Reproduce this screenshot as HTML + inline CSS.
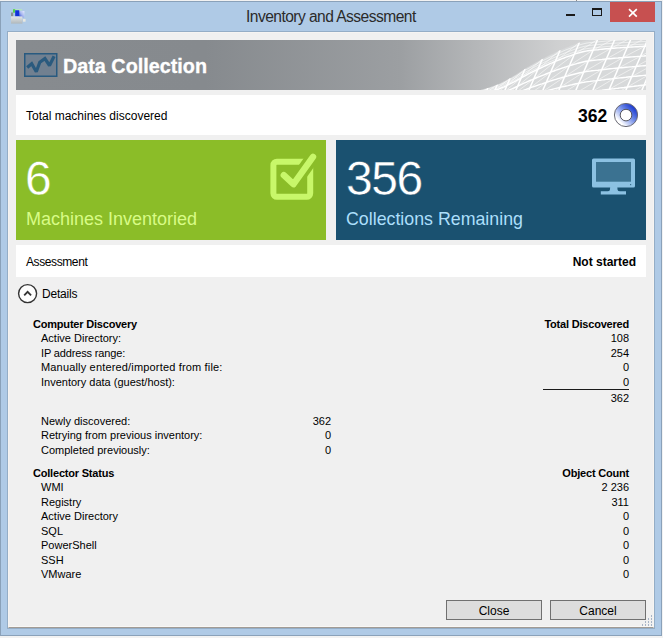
<!DOCTYPE html>
<html><head><meta charset="utf-8">
<style>
html,body{margin:0;padding:0;}
body{width:663px;height:638px;position:relative;overflow:hidden;background:#f2f2f2;font-family:"Liberation Sans",sans-serif;}
.a{position:absolute;}
.t{position:absolute;white-space:nowrap;line-height:1;}
#win{left:0;top:1px;width:660px;height:633px;background:#afcae6;border:1px solid #8aa1b9;}
#edge{left:7px;top:31px;width:646px;height:596px;border:1px solid #94adc6;}
#client{left:8px;top:32px;width:644px;height:594px;background:#f0f0f0;border:1px solid #f6f4f2;border-bottom-color:#a19b95;box-shadow:inset 0 -1px 0 #f8f7f5;}
.r{text-align:right;}
.n{font-size:11px;color:#000;}
.b{font-size:11px;font-weight:bold;color:#000;letter-spacing:-0.2px;}
</style></head><body>
<div id="win" class="a"></div>
<div class="a" style="left:576px;top:0;width:1px;height:1px;background:#8c8c8c"></div>
<!-- title -->
<div class="t" style="left:246px;top:9px;font-size:15.6px;letter-spacing:-0.55px;color:#2b2b2b;">Inventory and Assessment</div>
<!-- app icon -->
<svg class="a" style="left:10px;top:8px" width="17" height="17" viewBox="0 0 17 17">
  <defs><linearGradient id="ig" x1="1" y1="0" x2="0" y2="1"><stop offset="0" stop-color="#e8ecff"/><stop offset="0.5" stop-color="#a8b8f0"/><stop offset="1" stop-color="#3048d0"/></linearGradient>
  <linearGradient id="bg2" x1="0" y1="0" x2="0" y2="1"><stop offset="0" stop-color="#e2e6e8"/><stop offset="1" stop-color="#b0b8bc"/></linearGradient></defs>
  <rect x="3" y="1.2" width="9" height="1.2" fill="#b8e8b8"/>
  <rect x="3" y="1.2" width="2.2" height="3.5" fill="#50d050"/>
  <rect x="1" y="4.5" width="2.2" height="4" fill="#8a9090"/>
  <rect x="9.2" y="3" width="5.2" height="6.5" fill="url(#ig)"/>
  <path d="M5.2 2.2 L9.2 2.2 L9.4 8.4 L5.2 8.4 Z" fill="#1030d8"/>
  <rect x="1" y="8.4" width="11.5" height="7.2" fill="url(#bg2)"/>
  <rect x="13" y="10.9" width="2.6" height="2.8" fill="#e8e8e0"/>
</svg>
<!-- min / max / close -->
<div class="a" style="left:566px;top:14px;width:9px;height:2px;background:#1a1a1a"></div>
<div class="a" style="left:592px;top:8px;width:8px;height:5px;border:1px solid #1a1a1a;border-top-width:2px"></div>
<div class="a" style="left:610px;top:2px;width:45px;height:20px;background:#c75050"></div>
<svg class="a" style="left:628px;top:8px" width="10" height="10" viewBox="0 0 10 10"><path d="M1 1.2L8.8 8.6M8.8 1.2L1 8.6" stroke="#fff" stroke-width="1.7"/></svg>

<div id="edge" class="a"></div>
<div id="client" class="a"></div>

<!-- header banner -->
<div class="a" style="left:16px;top:40px;width:630px;height:50px;background:linear-gradient(to right,#878b8f 0%,#868a8e 30%,#9c9fa2 61%,#cfd0d1 86%,#dadada 100%);overflow:hidden">
  <svg class="a" style="left:0;top:0" width="630" height="50" viewBox="0 0 630 50">
<defs><clipPath id="mc"><path d="M424.0 54.0 L425.3 54.0 L427.0 53.9 L428.9 53.9 L431.2 53.8 L433.6 53.8 L436.1 53.7 L438.7 53.6 L441.2 53.5 L443.7 53.4 L446.0 53.3 L448.1 53.2 L450.0 53.0 L451.6 52.8 L453.1 52.6 L454.4 52.4 L455.6 52.2 L456.8 52.0 L457.9 51.8 L458.9 51.5 L460.0 51.3 L461.1 51.0 L462.2 50.7 L463.3 50.3 L464.6 50.0 L465.9 49.6 L467.3 49.3 L468.7 48.8 L470.1 48.4 L471.6 48.0 L473.0 47.5 L474.4 47.1 L475.9 46.6 L477.3 46.1 L478.7 45.6 L480.1 45.0 L481.4 44.5 L482.7 44.0 L484.0 43.4 L485.2 42.8 L486.4 42.2 L487.6 41.6 L488.8 41.0 L490.0 40.4 L491.2 39.7 L492.4 39.1 L493.6 38.4 L494.8 37.7 L496.0 37.0 L497.2 36.3 L498.5 35.5 L499.8 34.7 L501.0 33.9 L502.3 33.1 L503.6 32.3 L504.9 31.5 L506.1 30.7 L507.4 29.9 L508.6 29.1 L509.8 28.3 L511.0 27.6 L512.1 26.9 L513.3 26.3 L514.4 25.6 L515.4 25.0 L516.5 24.4 L517.5 23.8 L518.6 23.2 L519.6 22.6 L520.7 22.0 L521.8 21.4 L522.9 20.8 L524.0 20.2 L525.2 19.6 L526.3 19.0 L527.5 18.3 L528.7 17.7 L529.9 17.1 L531.2 16.4 L532.4 15.8 L533.6 15.2 L534.8 14.6 L536.1 14.0 L537.3 13.4 L538.5 12.8 L539.7 12.2 L540.9 11.7 L542.1 11.1 L543.3 10.5 L544.5 10.0 L545.7 9.5 L546.9 8.9 L548.1 8.4 L549.3 7.9 L550.6 7.4 L551.8 6.9 L553.0 6.4 L554.2 5.9 L555.5 5.4 L556.8 4.9 L558.0 4.4 L559.3 4.0 L560.6 3.5 L561.9 3.1 L563.1 2.6 L564.4 2.2 L565.6 1.9 L566.8 1.5 L568.0 1.2 L569.1 0.9 L570.2 0.7 L571.3 0.5 L572.3 0.4 L573.3 0.2 L574.3 0.1 L575.3 0.0 L576.4 -0.1 L577.4 -0.2 L578.6 -0.3 L579.7 -0.4 L581.0 -0.5 L582.3 -0.6 L583.6 -0.8 L584.8 -0.9 L586.1 -1.0 L587.5 -1.1 L588.9 -1.3 L590.3 -1.4 L591.9 -1.5 L593.5 -1.6 L595.2 -1.8 L597.0 -1.9 L599.0 -2.0 L601.1 -2.1 L603.1 -2.2 L605.3 -2.4 L607.5 -2.5 L609.8 -2.6 L612.2 -2.7 L614.8 -2.8 L617.5 -2.9 L620.3 -3.1 L623.4 -3.2 L626.6 -3.3 L630.0 -3.5 L633.9 -3.7 L638.3 -3.9 L643.1 -4.1 L648.3 -4.4 L653.6 -4.6 L658.9 -4.8 L664.2 -5.1 L669.1 -5.3 L673.8 -5.5 L677.9 -5.7 L681.3 -5.9 L684.0 -6.0 L684.0 60.0 L424.0 60.0 Z"/></clipPath></defs>
<path d="M424.0 54.0 L425.3 54.0 L427.0 53.9 L428.9 53.9 L431.2 53.8 L433.6 53.8 L436.1 53.7 L438.7 53.6 L441.2 53.5 L443.7 53.4 L446.0 53.3 L448.1 53.2 L450.0 53.0 L451.6 52.8 L453.1 52.6 L454.4 52.4 L455.6 52.2 L456.8 52.0 L457.9 51.8 L458.9 51.5 L460.0 51.3 L461.1 51.0 L462.2 50.7 L463.3 50.3 L464.6 50.0 L465.9 49.6 L467.3 49.3 L468.7 48.8 L470.1 48.4 L471.6 48.0 L473.0 47.5 L474.4 47.1 L475.9 46.6 L477.3 46.1 L478.7 45.6 L480.1 45.0 L481.4 44.5 L482.7 44.0 L484.0 43.4 L485.2 42.8 L486.4 42.2 L487.6 41.6 L488.8 41.0 L490.0 40.4 L491.2 39.7 L492.4 39.1 L493.6 38.4 L494.8 37.7 L496.0 37.0 L497.2 36.3 L498.5 35.5 L499.8 34.7 L501.0 33.9 L502.3 33.1 L503.6 32.3 L504.9 31.5 L506.1 30.7 L507.4 29.9 L508.6 29.1 L509.8 28.3 L511.0 27.6 L512.1 26.9 L513.3 26.3 L514.4 25.6 L515.4 25.0 L516.5 24.4 L517.5 23.8 L518.6 23.2 L519.6 22.6 L520.7 22.0 L521.8 21.4 L522.9 20.8 L524.0 20.2 L525.2 19.6 L526.3 19.0 L527.5 18.3 L528.7 17.7 L529.9 17.1 L531.2 16.4 L532.4 15.8 L533.6 15.2 L534.8 14.6 L536.1 14.0 L537.3 13.4 L538.5 12.8 L539.7 12.2 L540.9 11.7 L542.1 11.1 L543.3 10.5 L544.5 10.0 L545.7 9.5 L546.9 8.9 L548.1 8.4 L549.3 7.9 L550.6 7.4 L551.8 6.9 L553.0 6.4 L554.2 5.9 L555.5 5.4 L556.8 4.9 L558.0 4.4 L559.3 4.0 L560.6 3.5 L561.9 3.1 L563.1 2.6 L564.4 2.2 L565.6 1.9 L566.8 1.5 L568.0 1.2 L569.1 0.9 L570.2 0.7 L571.3 0.5 L572.3 0.4 L573.3 0.2 L574.3 0.1 L575.3 0.0 L576.4 -0.1 L577.4 -0.2 L578.6 -0.3 L579.7 -0.4 L581.0 -0.5 L582.3 -0.6 L583.6 -0.8 L584.8 -0.9 L586.1 -1.0 L587.5 -1.1 L588.9 -1.3 L590.3 -1.4 L591.9 -1.5 L593.5 -1.6 L595.2 -1.8 L597.0 -1.9 L599.0 -2.0 L601.1 -2.1 L603.1 -2.2 L605.3 -2.4 L607.5 -2.5 L609.8 -2.6 L612.2 -2.7 L614.8 -2.8 L617.5 -2.9 L620.3 -3.1 L623.4 -3.2 L626.6 -3.3 L630.0 -3.5 L633.9 -3.7 L638.3 -3.9 L643.1 -4.1 L648.3 -4.4 L653.6 -4.6 L658.9 -4.8 L664.2 -5.1 L669.1 -5.3 L673.8 -5.5 L677.9 -5.7 L681.3 -5.9 L684.0 -6.0 L684.0 60.0 L424.0 60.0 Z" fill="#d8d9da"/>
<g clip-path="url(#mc)" fill="none" stroke="#fff">
<g stroke-width="0.9" opacity="0.6"><path d="M645.2 5.2 L666.7 -5.2"/><path d="M641.1 15.0 L662.7 4.2"/><path d="M636.8 24.9 L658.6 13.7"/><path d="M632.5 34.9 L654.5 23.3"/><path d="M628.1 45.1 L650.3 33.0"/><path d="M623.7 55.3 L646.0 42.9"/><path d="M628.8 6.2 L649.4 -4.4"/><path d="M624.5 16.2 L645.2 5.2"/><path d="M620.2 26.4 L641.1 15.0"/><path d="M615.7 36.7 L636.8 24.9"/><path d="M611.3 47.1 L632.5 34.9"/><path d="M606.7 57.6 L628.1 45.1"/><path d="M611.4 7.3 L633.1 -3.6"/><path d="M606.9 17.6 L628.8 6.2"/><path d="M602.5 28.0 L624.5 16.2"/><path d="M597.9 38.5 L620.2 26.4"/><path d="M593.3 49.2 L615.7 36.7"/><path d="M588.7 60.0 L611.3 47.1"/><path d="M594.9 8.4 L615.7 -2.8"/><path d="M590.3 19.0 L611.4 7.3"/><path d="M585.7 29.7 L606.9 17.6"/><path d="M581.1 40.5 L602.5 28.0"/><path d="M576.4 51.4 L597.9 38.5"/><path d="M571.7 62.3 L593.3 49.2"/><path d="M577.1 10.1 L599.4 -2.0"/><path d="M572.5 21.0 L594.9 8.4"/><path d="M567.7 32.1 L590.3 19.0"/><path d="M562.9 43.2 L585.7 29.7"/><path d="M558.2 54.1 L581.1 40.5"/><path d="M553.7 64.7 L576.4 51.4"/><path d="M558.4 14.3 L581.7 -0.6"/><path d="M553.4 25.7 L577.1 10.1"/><path d="M548.7 36.8 L572.5 21.0"/><path d="M544.1 47.4 L567.7 32.1"/><path d="M539.8 57.5 L562.9 43.2"/><path d="M535.6 67.1 L558.2 54.1"/><path d="M539.3 21.5 L563.4 2.5"/><path d="M534.7 32.2 L558.4 14.3"/><path d="M530.3 42.4 L553.4 25.7"/><path d="M526.2 51.9 L548.7 36.8"/><path d="M522.3 60.9 L544.1 47.4"/><path d="M518.7 69.4 L539.8 57.5"/><path d="M521.9 29.3 L544.1 10.2"/><path d="M517.8 38.9 L539.3 21.5"/><path d="M513.9 48.0 L534.7 32.2"/><path d="M510.3 56.4 L530.3 42.4"/><path d="M506.9 64.2 L526.2 51.9"/><path d="M503.8 71.4 L522.3 60.9"/><path d="M505.2 37.9 L526.4 18.9"/><path d="M501.6 46.3 L521.9 29.3"/><path d="M498.3 53.9 L517.8 38.9"/><path d="M495.4 60.8 L513.9 48.0"/><path d="M492.6 67.2 L510.3 56.4"/><path d="M490.0 73.2 L506.9 64.2"/><path d="M491.0 45.4 L509.1 28.7"/><path d="M488.1 52.1 L505.2 37.9"/><path d="M485.4 58.3 L501.6 46.3"/><path d="M483.0 64.1 L498.3 53.9"/><path d="M480.6 69.5 L495.4 60.8"/><path d="M478.3 74.8 L492.6 67.2"/><path d="M478.8 50.4 L494.1 38.1"/><path d="M476.5 55.9 L491.0 45.4"/><path d="M474.2 61.2 L488.1 52.1"/><path d="M472.0 66.4 L485.4 58.3"/><path d="M469.8 71.4 L483.0 64.1"/><path d="M467.7 76.2 L480.6 69.5"/><path d="M469.7 53.1 L481.4 44.5"/><path d="M467.5 58.2 L478.8 50.4"/><path d="M465.3 63.2 L476.5 55.9"/><path d="M463.3 68.0 L474.2 61.2"/><path d="M461.2 72.7 L472.0 66.4"/><path d="M459.2 77.3 L469.8 71.4"/><path d="M461.8 55.1 L471.9 47.9"/><path d="M459.7 60.0 L469.7 53.1"/><path d="M457.7 64.7 L467.5 58.2"/><path d="M455.7 69.3 L465.3 63.2"/><path d="M453.8 73.8 L463.3 68.0"/><path d="M451.8 78.3 L461.2 72.7"/></g>
<g stroke-width="0.8" opacity="0.7"><path d="M424.0 55.1 L426.0 55.1 L428.0 55.0 L430.0 54.9 L432.0 54.9 L434.0 54.8 L436.0 54.8 L438.0 54.7 L440.0 54.6 L442.0 54.5 L444.0 54.4 L446.0 54.3 L448.0 54.2 L450.0 54.0 L452.0 53.8 L454.0 53.5 L456.0 53.2 L458.0 52.8 L460.0 52.3 L462.0 51.8 L464.0 51.2 L466.0 50.7 L468.0 50.1 L470.0 49.6 L472.0 49.0 L474.0 48.3 L476.0 47.7 L478.0 47.0 L480.0 46.2 L482.0 45.4 L484.0 44.6 L486.0 43.7 L488.0 42.7 L490.0 41.7 L492.0 40.6 L494.0 39.5 L496.0 38.4 L498.0 37.3 L500.0 36.1 L502.0 34.9 L504.0 33.6 L506.0 32.4 L508.0 31.1 L510.0 29.9 L512.0 28.7 L514.0 27.6 L516.0 26.5 L518.0 25.3 L520.0 24.3 L522.0 23.2 L524.0 22.1 L526.0 21.1 L528.0 20.1 L530.0 19.1 L532.0 18.1 L534.0 17.1 L536.0 16.1 L538.0 15.2 L540.0 14.3 L542.0 13.4 L544.0 12.5 L546.0 11.6 L548.0 10.7 L550.0 9.9 L552.0 9.1 L554.0 8.4 L556.0 7.6 L558.0 6.8 L560.0 6.1 L562.0 5.4 L564.0 4.8 L566.0 4.2 L568.0 3.7 L570.0 3.2 L572.0 2.9 L574.0 2.6 L576.0 2.4 L578.0 2.2 L580.0 2.1 L582.0 1.9 L584.0 1.7 L586.0 1.5 L588.0 1.3 L590.0 1.1 L592.0 0.9 L594.0 0.8 L596.0 0.6 L598.0 0.5 L600.0 0.4 L602.0 0.2 L604.0 0.1 L606.0 0.0 L608.0 -0.1 L610.0 -0.2 L612.0 -0.3 L614.0 -0.4 L616.0 -0.5 L618.0 -0.6 L620.0 -0.7 L622.0 -0.8 L624.0 -0.9 L626.0 -1.0 L628.0 -1.1 L630.0 -1.2 L632.0 -1.3 L634.0 -1.4 L636.0 -1.5 L638.0 -1.6 L640.0 -1.7 L642.0 -1.8 L644.0 -1.9"/><path d="M424.0 56.4 L426.0 56.3 L428.0 56.2 L430.0 56.2 L432.0 56.1 L434.0 56.0 L436.0 56.0 L438.0 55.9 L440.0 55.8 L442.0 55.7 L444.0 55.6 L446.0 55.5 L448.0 55.3 L450.0 55.2 L452.0 54.9 L454.0 54.7 L456.0 54.3 L458.0 53.9 L460.0 53.5 L462.0 52.9 L464.0 52.4 L466.0 51.9 L468.0 51.4 L470.0 50.8 L472.0 50.2 L474.0 49.6 L476.0 49.0 L478.0 48.3 L480.0 47.6 L482.0 46.8 L484.0 46.0 L486.0 45.1 L488.0 44.1 L490.0 43.2 L492.0 42.1 L494.0 41.1 L496.0 40.0 L498.0 38.9 L500.0 37.8 L502.0 36.6 L504.0 35.4 L506.0 34.2 L508.0 33.0 L510.0 31.8 L512.0 30.7 L514.0 29.6 L516.0 28.5 L518.0 27.4 L520.0 26.4 L522.0 25.3 L524.0 24.3 L526.0 23.3 L528.0 22.3 L530.0 21.4 L532.0 20.4 L534.0 19.4 L536.0 18.5 L538.0 17.6 L540.0 16.7 L542.0 15.8 L544.0 15.0 L546.0 14.1 L548.0 13.3 L550.0 12.5 L552.0 11.7 L554.0 11.0 L556.0 10.3 L558.0 9.5 L560.0 8.8 L562.0 8.2 L564.0 7.5 L566.0 7.0 L568.0 6.4 L570.0 6.0 L572.0 5.7 L574.0 5.4 L576.0 5.2 L578.0 5.0 L580.0 4.8 L582.0 4.6 L584.0 4.4 L586.0 4.2 L588.0 4.0 L590.0 3.8 L592.0 3.7 L594.0 3.5 L596.0 3.4 L598.0 3.2 L600.0 3.1 L602.0 3.0 L604.0 2.8 L606.0 2.7 L608.0 2.6 L610.0 2.5 L612.0 2.4 L614.0 2.3 L616.0 2.2 L618.0 2.1 L620.0 2.0 L622.0 1.9 L624.0 1.8 L626.0 1.6 L628.0 1.5 L630.0 1.4 L632.0 1.3 L634.0 1.2 L636.0 1.1 L638.0 1.0 L640.0 0.9 L642.0 0.8 L644.0 0.7"/><path d="M424.0 57.6 L426.0 57.6 L428.0 57.5 L430.0 57.4 L432.0 57.3 L434.0 57.2 L436.0 57.2 L438.0 57.1 L440.0 57.0 L442.0 56.9 L444.0 56.8 L446.0 56.7 L448.0 56.5 L450.0 56.3 L452.0 56.1 L454.0 55.8 L456.0 55.5 L458.0 55.1 L460.0 54.6 L462.0 54.1 L464.0 53.6 L466.0 53.1 L468.0 52.6 L470.0 52.0 L472.0 51.5 L474.0 50.9 L476.0 50.2 L478.0 49.6 L480.0 48.9 L482.0 48.2 L484.0 47.4 L486.0 46.5 L488.0 45.6 L490.0 44.6 L492.0 43.6 L494.0 42.6 L496.0 41.6 L498.0 40.5 L500.0 39.4 L502.0 38.3 L504.0 37.1 L506.0 36.0 L508.0 34.8 L510.0 33.7 L512.0 32.6 L514.0 31.6 L516.0 30.5 L518.0 29.5 L520.0 28.5 L522.0 27.5 L524.0 26.5 L526.0 25.5 L528.0 24.6 L530.0 23.6 L532.0 22.7 L534.0 21.8 L536.0 20.9 L538.0 20.0 L540.0 19.2 L542.0 18.3 L544.0 17.5 L546.0 16.7 L548.0 15.9 L550.0 15.1 L552.0 14.4 L554.0 13.6 L556.0 12.9 L558.0 12.2 L560.0 11.5 L562.0 10.9 L564.0 10.3 L566.0 9.7 L568.0 9.2 L570.0 8.8 L572.0 8.5 L574.0 8.2 L576.0 8.0 L578.0 7.8 L580.0 7.6 L582.0 7.4 L584.0 7.2 L586.0 7.0 L588.0 6.8 L590.0 6.6 L592.0 6.4 L594.0 6.3 L596.0 6.1 L598.0 6.0 L600.0 5.8 L602.0 5.7 L604.0 5.6 L606.0 5.4 L608.0 5.3 L610.0 5.2 L612.0 5.1 L614.0 5.0 L616.0 4.8 L618.0 4.7 L620.0 4.6 L622.0 4.5 L624.0 4.4 L626.0 4.3 L628.0 4.2 L630.0 4.0 L632.0 3.9 L634.0 3.8 L636.0 3.7 L638.0 3.6 L640.0 3.5 L642.0 3.3 L644.0 3.2"/></g>
<g stroke-width="1.4"><path d="M424.0 58.7 L426.0 58.6 L428.0 58.5 L430.0 58.4 L432.0 58.3 L434.0 58.2 L436.0 58.1 L438.0 58.1 L440.0 58.0 L442.0 57.8 L444.0 57.7 L446.0 57.6 L448.0 57.4 L450.0 57.3 L452.0 57.0 L454.0 56.8 L456.0 56.4 L458.0 56.0 L460.0 55.6 L462.0 55.1 L464.0 54.6 L466.0 54.1 L468.0 53.6 L470.0 53.0 L472.0 52.5 L474.0 51.9 L476.0 51.3 L478.0 50.7 L480.0 50.0 L482.0 49.3 L484.0 48.5 L486.0 47.6 L488.0 46.8 L490.0 45.8 L492.0 44.9 L494.0 43.9 L496.0 42.9 L498.0 41.9 L500.0 40.8 L502.0 39.7 L504.0 38.6 L506.0 37.5 L508.0 36.4 L510.0 35.3 L512.0 34.2 L514.0 33.2 L516.0 32.2 L518.0 31.2 L520.0 30.2 L522.0 29.2 L524.0 28.3 L526.0 27.3 L528.0 26.4 L530.0 25.5 L532.0 24.6 L534.0 23.7 L536.0 22.9 L538.0 22.0 L540.0 21.2 L542.0 20.3 L544.0 19.5 L546.0 18.7 L548.0 18.0 L550.0 17.2 L552.0 16.5 L554.0 15.8 L556.0 15.1 L558.0 14.4 L560.0 13.7 L562.0 13.1 L564.0 12.5 L566.0 12.0 L568.0 11.5 L570.0 11.1 L572.0 10.7 L574.0 10.5 L576.0 10.3 L578.0 10.1 L580.0 9.9 L582.0 9.7 L584.0 9.4 L586.0 9.2 L588.0 9.0 L590.0 8.8 L592.0 8.7 L594.0 8.5 L596.0 8.3 L598.0 8.2 L600.0 8.0 L602.0 7.9 L604.0 7.8 L606.0 7.6 L608.0 7.5 L610.0 7.4 L612.0 7.3 L614.0 7.1 L616.0 7.0 L618.0 6.9 L620.0 6.8 L622.0 6.7 L624.0 6.5 L626.0 6.4 L628.0 6.3 L630.0 6.2 L632.0 6.0 L634.0 5.9 L636.0 5.8 L638.0 5.7 L640.0 5.6 L642.0 5.4 L644.0 5.3"/><path d="M424.0 63.3 L426.0 63.2 L428.0 63.1 L430.0 63.0 L432.0 62.9 L434.0 62.7 L436.0 62.6 L438.0 62.5 L440.0 62.3 L442.0 62.2 L444.0 62.1 L446.0 61.9 L448.0 61.7 L450.0 61.5 L452.0 61.3 L454.0 61.0 L456.0 60.7 L458.0 60.3 L460.0 59.9 L462.0 59.5 L464.0 59.0 L466.0 58.6 L468.0 58.1 L470.0 57.6 L472.0 57.1 L474.0 56.6 L476.0 56.1 L478.0 55.5 L480.0 54.9 L482.0 54.3 L484.0 53.6 L486.0 52.9 L488.0 52.1 L490.0 51.3 L492.0 50.5 L494.0 49.7 L496.0 48.8 L498.0 47.9 L500.0 47.0 L502.0 46.1 L504.0 45.1 L506.0 44.2 L508.0 43.2 L510.0 42.3 L512.0 41.4 L514.0 40.5 L516.0 39.7 L518.0 38.8 L520.0 38.0 L522.0 37.2 L524.0 36.4 L526.0 35.6 L528.0 34.8 L530.0 34.0 L532.0 33.2 L534.0 32.4 L536.0 31.7 L538.0 31.0 L540.0 30.2 L542.0 29.5 L544.0 28.8 L546.0 28.1 L548.0 27.5 L550.0 26.8 L552.0 26.2 L554.0 25.6 L556.0 25.0 L558.0 24.4 L560.0 23.8 L562.0 23.2 L564.0 22.7 L566.0 22.2 L568.0 21.7 L570.0 21.3 L572.0 21.0 L574.0 20.8 L576.0 20.5 L578.0 20.3 L580.0 20.1 L582.0 19.9 L584.0 19.7 L586.0 19.5 L588.0 19.2 L590.0 19.0 L592.0 18.8 L594.0 18.7 L596.0 18.5 L598.0 18.3 L600.0 18.1 L602.0 18.0 L604.0 17.8 L606.0 17.6 L608.0 17.5 L610.0 17.3 L612.0 17.2 L614.0 17.0 L616.0 16.9 L618.0 16.7 L620.0 16.6 L622.0 16.4 L624.0 16.3 L626.0 16.1 L628.0 16.0 L630.0 15.8 L632.0 15.7 L634.0 15.5 L636.0 15.4 L638.0 15.2 L640.0 15.1 L642.0 14.9 L644.0 14.8"/><path d="M424.0 68.0 L426.0 67.9 L428.0 67.7 L430.0 67.5 L432.0 67.4 L434.0 67.2 L436.0 67.1 L438.0 66.9 L440.0 66.7 L442.0 66.6 L444.0 66.4 L446.0 66.2 L448.0 66.0 L450.0 65.8 L452.0 65.5 L454.0 65.3 L456.0 65.0 L458.0 64.6 L460.0 64.2 L462.0 63.8 L464.0 63.4 L466.0 63.0 L468.0 62.6 L470.0 62.2 L472.0 61.7 L474.0 61.3 L476.0 60.8 L478.0 60.3 L480.0 59.8 L482.0 59.3 L484.0 58.7 L486.0 58.1 L488.0 57.5 L490.0 56.8 L492.0 56.1 L494.0 55.4 L496.0 54.7 L498.0 54.0 L500.0 53.2 L502.0 52.5 L504.0 51.7 L506.0 50.9 L508.0 50.1 L510.0 49.4 L512.0 48.6 L514.0 47.9 L516.0 47.2 L518.0 46.5 L520.0 45.8 L522.0 45.1 L524.0 44.4 L526.0 43.8 L528.0 43.1 L530.0 42.5 L532.0 41.8 L534.0 41.2 L536.0 40.5 L538.0 39.9 L540.0 39.3 L542.0 38.7 L544.0 38.1 L546.0 37.5 L548.0 37.0 L550.0 36.4 L552.0 35.9 L554.0 35.3 L556.0 34.8 L558.0 34.3 L560.0 33.8 L562.0 33.3 L564.0 32.8 L566.0 32.4 L568.0 32.0 L570.0 31.6 L572.0 31.3 L574.0 31.1 L576.0 30.8 L578.0 30.6 L580.0 30.4 L582.0 30.2 L584.0 29.9 L586.0 29.7 L588.0 29.5 L590.0 29.2 L592.0 29.0 L594.0 28.8 L596.0 28.6 L598.0 28.4 L600.0 28.2 L602.0 28.0 L604.0 27.8 L606.0 27.7 L608.0 27.5 L610.0 27.3 L612.0 27.1 L614.0 26.9 L616.0 26.8 L618.0 26.6 L620.0 26.4 L622.0 26.2 L624.0 26.0 L626.0 25.9 L628.0 25.7 L630.0 25.5 L632.0 25.3 L634.0 25.1 L636.0 25.0 L638.0 24.8 L640.0 24.6 L642.0 24.4 L644.0 24.2"/><path d="M424.0 72.7 L426.0 72.5 L428.0 72.3 L430.0 72.1 L432.0 71.9 L434.0 71.7 L436.0 71.5 L438.0 71.3 L440.0 71.1 L442.0 70.9 L444.0 70.7 L446.0 70.5 L448.0 70.3 L450.0 70.0 L452.0 69.8 L454.0 69.5 L456.0 69.2 L458.0 68.9 L460.0 68.6 L462.0 68.2 L464.0 67.9 L466.0 67.5 L468.0 67.1 L470.0 66.8 L472.0 66.4 L474.0 66.0 L476.0 65.6 L478.0 65.2 L480.0 64.7 L482.0 64.3 L484.0 63.8 L486.0 63.3 L488.0 62.8 L490.0 62.3 L492.0 61.7 L494.0 61.2 L496.0 60.6 L498.0 60.0 L500.0 59.5 L502.0 58.9 L504.0 58.2 L506.0 57.6 L508.0 57.0 L510.0 56.4 L512.0 55.9 L514.0 55.3 L516.0 54.7 L518.0 54.2 L520.0 53.6 L522.0 53.1 L524.0 52.5 L526.0 52.0 L528.0 51.5 L530.0 50.9 L532.0 50.4 L534.0 49.9 L536.0 49.4 L538.0 48.9 L540.0 48.4 L542.0 47.9 L544.0 47.4 L546.0 46.9 L548.0 46.5 L550.0 46.0 L552.0 45.6 L554.0 45.1 L556.0 44.7 L558.0 44.2 L560.0 43.8 L562.0 43.4 L564.0 43.0 L566.0 42.6 L568.0 42.3 L570.0 41.9 L572.0 41.6 L574.0 41.4 L576.0 41.1 L578.0 40.9 L580.0 40.7 L582.0 40.4 L584.0 40.2 L586.0 39.9 L588.0 39.7 L590.0 39.4 L592.0 39.2 L594.0 39.0 L596.0 38.8 L598.0 38.5 L600.0 38.3 L602.0 38.1 L604.0 37.9 L606.0 37.7 L608.0 37.5 L610.0 37.3 L612.0 37.0 L614.0 36.8 L616.0 36.6 L618.0 36.4 L620.0 36.2 L622.0 36.0 L624.0 35.8 L626.0 35.6 L628.0 35.4 L630.0 35.2 L632.0 35.0 L634.0 34.7 L636.0 34.5 L638.0 34.3 L640.0 34.1 L642.0 33.9 L644.0 33.7"/><path d="M424.0 77.4 L426.0 77.1 L428.0 76.9 L430.0 76.7 L432.0 76.4 L434.0 76.2 L436.0 76.0 L438.0 75.8 L440.0 75.5 L442.0 75.3 L444.0 75.0 L446.0 74.8 L448.0 74.6 L450.0 74.3 L452.0 74.0 L454.0 73.8 L456.0 73.5 L458.0 73.2 L460.0 72.9 L462.0 72.6 L464.0 72.3 L466.0 72.0 L468.0 71.6 L470.0 71.3 L472.0 71.0 L474.0 70.7 L476.0 70.3 L478.0 70.0 L480.0 69.6 L482.0 69.3 L484.0 68.9 L486.0 68.5 L488.0 68.1 L490.0 67.7 L492.0 67.3 L494.0 66.9 L496.0 66.5 L498.0 66.1 L500.0 65.7 L502.0 65.2 L504.0 64.8 L506.0 64.4 L508.0 63.9 L510.0 63.5 L512.0 63.1 L514.0 62.6 L516.0 62.2 L518.0 61.8 L520.0 61.4 L522.0 61.0 L524.0 60.6 L526.0 60.2 L528.0 59.8 L530.0 59.4 L532.0 59.0 L534.0 58.6 L536.0 58.2 L538.0 57.8 L540.0 57.5 L542.0 57.1 L544.0 56.7 L546.0 56.3 L548.0 56.0 L550.0 55.6 L552.0 55.2 L554.0 54.9 L556.0 54.5 L558.0 54.2 L560.0 53.8 L562.0 53.5 L564.0 53.2 L566.0 52.8 L568.0 52.5 L570.0 52.2 L572.0 51.9 L574.0 51.7 L576.0 51.4 L578.0 51.2 L580.0 50.9 L582.0 50.7 L584.0 50.4 L586.0 50.2 L588.0 49.9 L590.0 49.6 L592.0 49.4 L594.0 49.2 L596.0 48.9 L598.0 48.7 L600.0 48.4 L602.0 48.2 L604.0 47.9 L606.0 47.7 L608.0 47.5 L610.0 47.2 L612.0 47.0 L614.0 46.7 L616.0 46.5 L618.0 46.3 L620.0 46.0 L622.0 45.8 L624.0 45.5 L626.0 45.3 L628.0 45.1 L630.0 44.8 L632.0 44.6 L634.0 44.4 L636.0 44.1 L638.0 43.9 L640.0 43.6 L642.0 43.4 L644.0 43.2"/></g>
<g stroke-width="1.5"><path d="M640.4 56.0 L666.7 -5.2"/><path d="M623.4 56.0 L649.4 -4.4"/><path d="M607.4 56.0 L633.1 -3.6"/><path d="M590.4 56.0 L615.7 -2.8"/><path d="M574.4 56.0 L599.4 -2.0"/><path d="M557.4 56.0 L581.7 -0.6"/><path d="M540.4 56.0 L563.4 2.5"/><path d="M524.4 56.0 L544.1 10.2"/><path d="M510.4 56.0 L526.4 18.9"/><path d="M497.4 56.0 L509.1 28.7"/><path d="M486.4 56.0 L494.1 38.1"/><path d="M476.4 56.0 L481.4 44.5"/><path d="M468.4 56.0 L471.9 47.9"/><path d="M461.4 56.0 L463.9 50.2"/></g>
</g>
</svg>
  <svg class="a" style="left:8px;top:13px" width="34" height="25" viewBox="0 0 34 25">
    <rect x="0.75" y="0.75" width="32" height="22.5" fill="#718090" stroke="#285a80" stroke-width="1.5"/>
    <path d="M3.2 14.5 L7.7 10.8 L12.3 18.8 L15.8 9.2 L20.9 5.6 L25.5 12.5 L30.1 3.3" fill="none" stroke="#2a5a7e" stroke-width="3.2" stroke-linejoin="miter" stroke-miterlimit="1.6"/>
  </svg>
  <div class="t" style="left:47px;top:17px;font-size:19.8px;font-weight:bold;color:#fff;-webkit-text-stroke:0.3px #fff">Data Collection</div>
</div>

<!-- total machines row -->
<div class="a" style="left:16px;top:95px;width:630px;height:40px;background:#fff"></div>
<div class="t" style="left:26px;top:110px;font-size:12px;color:#000">Total machines discovered</div>
<div class="t" style="left:578px;top:108px;font-size:17.5px;font-weight:bold;color:#000">362</div>
<svg class="a" style="left:613px;top:102px" width="26" height="26" viewBox="0 0 26 26">
  <defs><linearGradient id="rg" x1="1" y1="0" x2="0" y2="1"><stop offset="0.1" stop-color="#0828cc"/><stop offset="0.42" stop-color="#6a86e6"/><stop offset="0.78" stop-color="#ffffff"/></linearGradient></defs>
  <circle cx="13" cy="13" r="11.6" fill="url(#rg)" stroke="#6a6a74" stroke-width="1"/>
  <circle cx="13" cy="13.1" r="5.8" fill="#fff" stroke="#55555f" stroke-width="1"/>
</svg>

<!-- tiles -->
<div class="a" style="left:16px;top:140px;width:310px;height:100px;background:#8bbd28"></div>
<div class="t" style="left:25px;top:155px;font-size:48px;color:#fff;-webkit-text-stroke:0.4px #8bbd28">6</div>
<div class="t" style="left:26px;top:210px;font-size:18px;color:#d8fb86">Machines Inventoried</div>
<svg class="a" style="left:266px;top:150px" width="56" height="56" viewBox="266 150 56 56">
  <rect x="273.4" y="161.7" width="36.8" height="35.1" rx="3.5" fill="none" stroke="#c8f76a" stroke-width="6"/>
  <path d="M293.5 184.2 L313 156.8" fill="none" stroke="#8bbd28" stroke-width="13.5" stroke-linecap="butt"/>
  <path d="M283.8 175.2 L293.5 184.2 L313 156.8" fill="none" stroke="#c8f76a" stroke-width="6.4" stroke-linecap="round" stroke-linejoin="round"/>
</svg>

<div class="a" style="left:336px;top:140px;width:310px;height:100px;background:#1a5170"></div>
<div class="t" style="left:346px;top:155px;font-size:48px;letter-spacing:-1.5px;color:#fff;-webkit-text-stroke:0.4px #1a5170">356</div>
<div class="t" style="left:346px;top:211px;font-size:17.8px;color:#acdffb">Collections Remaining</div>
<svg class="a" style="left:590px;top:156px" width="48" height="42" viewBox="590 156 48 42">
  <rect x="592" y="158.4" width="43" height="29" rx="1.5" fill="#8cc1e2"/>
  <rect x="596" y="162" width="35" height="19.7" fill="#3b7291"/>
  <rect x="630" y="184" width="1.2" height="1.2" fill="#3b7291"/>
  <path d="M610.2 187 L617.3 187 L617.6 190 Q618 191.2 620 191.2 L626 191.2 L626 194.4 L600.8 194.4 L600.8 191.2 L607.5 191.2 Q609.5 191.2 609.9 190 Z" fill="#8cc1e2"/>
</svg>

<!-- assessment row -->
<div class="a" style="left:16px;top:245px;width:630px;height:32px;background:#fff"></div>
<div class="t" style="left:26px;top:256px;font-size:12px;letter-spacing:-0.4px;color:#000">Assessment</div>
<div class="t r" style="left:546px;width:90px;top:256px;font-size:12px;font-weight:bold;color:#000">Not started</div>

<!-- details expander -->
<svg class="a" style="left:17px;top:283px" width="22" height="22" viewBox="17 283 22 22">
  <circle cx="27.6" cy="293.6" r="9" fill="#fdfdfd" stroke="#333" stroke-width="1.4"/>
  <path d="M24.2 295.3 L27.6 291.8 L31.1 295.3" fill="none" stroke="#333" stroke-width="1.8"/>
</svg>
<div class="t" style="left:42px;top:288px;font-size:12px;letter-spacing:-0.2px;color:#000">Details</div>

<!-- computer discovery -->
<div class="t b" style="left:33px;top:319px">Computer Discovery</div>
<div class="t n" style="left:41px;top:333px">Active Directory:</div>
<div class="t n" style="left:41px;top:348px;letter-spacing:-0.15px">IP address range:</div>
<div class="t n" style="left:41px;top:362px;letter-spacing:0.17px">Manually entered/imported from file:</div>
<div class="t n" style="left:41px;top:377px">Inventory data (guest/host):</div>

<div class="t b r" style="left:500px;width:129px;top:319px">Total Discovered</div>
<div class="t n r" style="left:560px;width:69px;top:333px">108</div>
<div class="t n r" style="left:560px;width:69px;top:348px">254</div>
<div class="t n r" style="left:560px;width:69px;top:362px">0</div>
<div class="t n r" style="left:560px;width:69px;top:377px">0</div>
<div class="a" style="left:543px;top:389px;width:86px;height:1px;background:#1a1a1a"></div>
<div class="t n r" style="left:560px;width:69px;top:393px">362</div>

<div class="t n" style="left:41px;top:416px">Newly discovered:</div>
<div class="t n" style="left:41px;top:430px">Retrying from previous inventory:</div>
<div class="t n" style="left:41px;top:445px">Completed previously:</div>
<div class="t n r" style="left:260px;width:71px;top:416px">362</div>
<div class="t n r" style="left:260px;width:71px;top:430px">0</div>
<div class="t n r" style="left:260px;width:71px;top:445px">0</div>

<!-- collector status -->
<div class="t b" style="left:33px;top:468px">Collector Status</div>
<div class="t n" style="left:41px;top:482px">WMI</div>
<div class="t n" style="left:41px;top:497px">Registry</div>
<div class="t n" style="left:41px;top:511px">Active Directory</div>
<div class="t n" style="left:41px;top:526px">SQL</div>
<div class="t n" style="left:41px;top:540px">PowerShell</div>
<div class="t n" style="left:41px;top:555px">SSH</div>
<div class="t n" style="left:41px;top:569px">VMware</div>

<div class="t b r" style="left:500px;width:129px;top:468px">Object Count</div>
<div class="t n r" style="left:560px;width:69px;top:482px">2 236</div>
<div class="t n r" style="left:560px;width:69px;top:497px">311</div>
<div class="t n r" style="left:560px;width:69px;top:511px">0</div>
<div class="t n r" style="left:560px;width:69px;top:526px">0</div>
<div class="t n r" style="left:560px;width:69px;top:540px">0</div>
<div class="t n r" style="left:560px;width:69px;top:555px">0</div>
<div class="t n r" style="left:560px;width:69px;top:569px">0</div>

<!-- buttons -->
<div class="a" style="left:446px;top:600px;width:94px;height:18px;border:1px solid #707070;background:#dddddd"></div>
<div class="t" style="left:446px;width:96px;text-align:center;top:605px;font-size:12px;color:#000">Close</div>
<div class="a" style="left:550px;top:600px;width:94px;height:18px;border:1px solid #707070;background:#dddddd"></div>
<div class="t" style="left:550px;width:96px;text-align:center;top:605px;font-size:12px;color:#000">Cancel</div>

<!-- grip -->
<svg class="a" style="left:642px;top:614px" width="12" height="12" viewBox="0 0 12 12" fill="#a7b4c6">
  <rect x="9" y="1" width="1" height="2"/>
  <rect x="6" y="4" width="1" height="2"/><rect x="9" y="4" width="1" height="2"/>
  <rect x="3" y="7" width="1" height="2"/><rect x="6" y="7" width="1" height="2"/><rect x="9" y="7" width="1" height="2"/>
  <rect x="0" y="10" width="1" height="2"/><rect x="3" y="10" width="1" height="2"/><rect x="6" y="10" width="1" height="2"/><rect x="9" y="10" width="1" height="2"/>
</svg>
</body></html>
